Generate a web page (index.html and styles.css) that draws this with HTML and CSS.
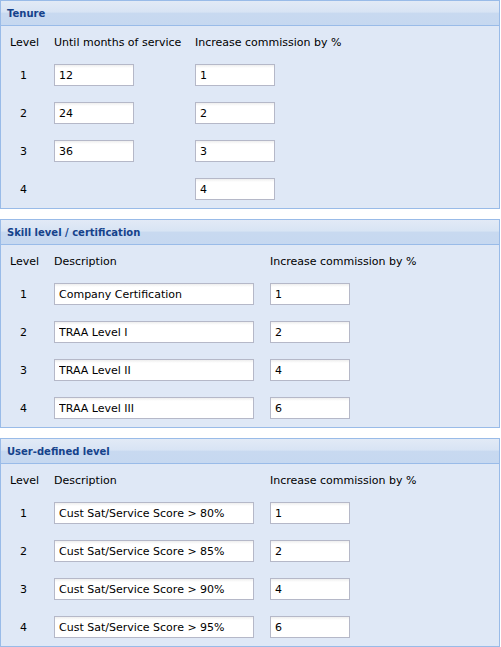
FILE: index.html
```html
<!DOCTYPE html>
<html>
<head>
<meta charset="utf-8">
<link rel="stylesheet" href="styles.css">
</head>
<body>
<div class="panel">
  <div class="panel-header">Tenure</div>
  <div class="panel-body grid tenure">
    <div class="colhead">Level</div>
    <div class="colhead">Until months of service</div>
    <div class="colhead">Increase commission by %</div>

    <div class="lvl">1</div>
    <div><input class="field short" type="text" value="12"></div>
    <div><input class="field short" type="text" value="1"></div>

    <div class="lvl">2</div>
    <div><input class="field short" type="text" value="24"></div>
    <div><input class="field short" type="text" value="2"></div>

    <div class="lvl">3</div>
    <div><input class="field short" type="text" value="36"></div>
    <div><input class="field short" type="text" value="3"></div>

    <div class="lvl">4</div>
    <div></div>
    <div><input class="field short" type="text" value="4"></div>
  </div>
</div>

<div class="panel">
  <div class="panel-header">Skill level / certification</div>
  <div class="panel-body grid desc">
    <div class="colhead">Level</div>
    <div class="colhead">Description</div>
    <div class="colhead">Increase commission by %</div>

    <div class="lvl">1</div>
    <div><input class="field long" type="text" value="Company Certification"></div>
    <div><input class="field short" type="text" value="1"></div>

    <div class="lvl">2</div>
    <div><input class="field long" type="text" value="TRAA Level I"></div>
    <div><input class="field short" type="text" value="2"></div>

    <div class="lvl">3</div>
    <div><input class="field long" type="text" value="TRAA Level II"></div>
    <div><input class="field short" type="text" value="4"></div>

    <div class="lvl">4</div>
    <div><input class="field long" type="text" value="TRAA Level III"></div>
    <div><input class="field short" type="text" value="6"></div>
  </div>
</div>

<div class="panel">
  <div class="panel-header">User-defined level</div>
  <div class="panel-body grid desc">
    <div class="colhead">Level</div>
    <div class="colhead">Description</div>
    <div class="colhead">Increase commission by %</div>

    <div class="lvl">1</div>
    <div><input class="field long" type="text" value="Cust Sat/Service Score &gt; 80%"></div>
    <div><input class="field short" type="text" value="1"></div>

    <div class="lvl">2</div>
    <div><input class="field long" type="text" value="Cust Sat/Service Score &gt; 85%"></div>
    <div><input class="field short" type="text" value="2"></div>

    <div class="lvl">3</div>
    <div><input class="field long" type="text" value="Cust Sat/Service Score &gt; 90%"></div>
    <div><input class="field short" type="text" value="4"></div>

    <div class="lvl">4</div>
    <div><input class="field long" type="text" value="Cust Sat/Service Score &gt; 95%"></div>
    <div><input class="field short" type="text" value="6"></div>
  </div>
</div>
</body>
</html>
```
FILE: styles.css
```css
html, body {
  margin: 0;
  padding: 0;
  background: #ffffff;
}
body {
  font-family: "DejaVu Sans", Verdana, sans-serif;
  font-size: 11px;
  color: #000;
}
.panel {
  width: 498px;
  border: 1px solid #99bbe8;
  background: #dfe8f6;
  margin-bottom: 10px;
}
.panel-header {
  height: 23px;
  padding-top: 1px;
  line-height: 23px;
  border-bottom: 1px solid #99bbe8;
  padding-left: 6px;
  font-weight: bold;
  font-size: 10px;
  color: #15428b;
  background: linear-gradient(to bottom, #e2eaf6 0%, #d8e4f4 45%, #c8d9f0 52%, #c6d8f0 100%);
}
.panel-body {
  padding: 8px 0 8px 9px;
}
.grid {
  display: grid;
  row-gap: 16px;
  align-items: center;
}
.tenure {
  grid-template-columns: 44px 141px 1fr;
}
.desc {
  grid-template-columns: 44px 216px 1fr;
}
.colhead {
  height: 16px;
  line-height: 16px;
  margin-top: 1px;
  margin-bottom: -3px;
}
.lvl {
  padding-left: 10px;
}
.field {
  display: block;
  box-sizing: border-box;
  height: 22px;
  margin: 0;
  padding: 0 4px;
  border: 1px solid #b5b8c8;
  background: linear-gradient(to bottom, #eeeeee 0, #ffffff 3px, #ffffff 100%);
  font-family: "DejaVu Sans", Verdana, sans-serif;
  font-size: 11px;
  color: #000;
  outline: none;
}
.short {
  width: 80px;
}
.long {
  width: 200px;
}
```
